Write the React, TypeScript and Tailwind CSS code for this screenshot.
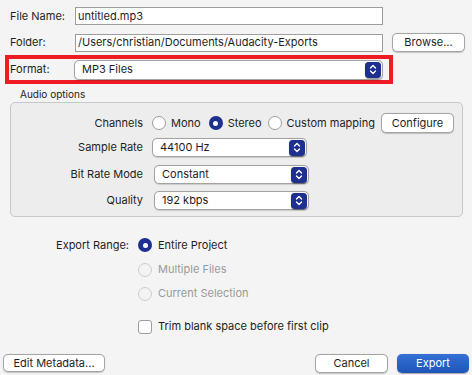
import React from 'react';

const font = { fontFamily: 'Inter, "Liberation Sans", sans-serif' };

const Chevrons: React.FC = () => (
  <span className="flex shrink-0 items-center justify-center w-[16px] h-[16px] rounded-[4px] bg-[#1d2f8f] shadow-[0_0.5px_1px_rgba(0,0,0,0.4)]">
    <svg width="8" height="11" viewBox="0 0 8 11" fill="none" stroke="white" strokeWidth="1.4" strokeLinecap="round" strokeLinejoin="round">
      <path d="M1.5 4 L4 1.5 L6.5 4" />
      <path d="M1.5 7 L4 9.5 L6.5 7" />
    </svg>
  </span>
);

const Select: React.FC<{ value: string; width: string; height: string }> = ({ value, width, height }) => (
  <div className={`flex items-center justify-between ${width} ${height} rounded-[5px] border border-[#a3a3a3] bg-white pl-[7px] pr-[1px] shadow-[0_0.5px_1px_rgba(0,0,0,0.15)]`}>
    <span>{value}</span>
    <Chevrons />
  </div>
);

const Radio: React.FC<{ checked?: boolean; disabled?: boolean }> = ({ checked, disabled }) =>
  checked ? (
    <span className="flex shrink-0 items-center justify-center w-[14px] h-[14px] rounded-full bg-[#1d2f8f]">
      <span className="w-[5px] h-[5px] rounded-full bg-white" />
    </span>
  ) : (
    <span
      className={`shrink-0 w-[14px] h-[14px] rounded-full border ${
        disabled ? 'border-[#cdcdcd] bg-[#f3f3f3]' : 'border-[#9c9c9c] bg-white'
      }`}
    />
  );

const Button: React.FC<{ label: string; className: string }> = ({ label, className }) => (
  <div
    className={`flex shrink-0 items-center justify-center whitespace-nowrap rounded-[5px] border border-[#a5a5a5] bg-white shadow-[0_0.5px_1px_rgba(0,0,0,0.2)] ${className}`}
  >
    {label}
  </div>
);

export default function App() {
  return (
    <div className="relative w-[472px] h-[375px] overflow-hidden bg-[#f4f4f4] text-[11px] text-[#1e1e1e] pt-[7px] whitespace-nowrap" style={font}>
      {/* File name */}
      <div className="flex items-center h-[18px]">
        <span className="w-[75px] pl-[10px]">File Name:</span>
        <div className="flex items-center w-[308px] h-[18px] border border-[#9d9d9d] bg-white pl-[2px]">untitled.mp3</div>
      </div>

      {/* Folder */}
      <div className="flex items-center h-[19px] mt-[8px]">
        <span className="w-[75px] pl-[10px]">Folder:</span>
        <div className="flex items-center w-[308px] h-[18px] border border-[#9d9d9d] bg-white pl-[2px]">
          /Users/christian/Documents/Audacity-Exports
        </div>
        <Button label="Browse..." className="ml-[9px] w-[73px] h-[19px]" />
      </div>

      {/* Format (highlighted) */}
      <div className="flex items-center ml-[5px] mt-[3px] w-[388px] h-[29px] border-4 border-[#ee1b24]">
        <span className="w-[65px] pl-[1px]">Format:</span>
        <Select value="MP3 Files" width="w-[309px]" height="h-[20px]" />
      </div>

      <div className="pl-[20px] mt-[3px] text-[10px] leading-[14px]">Audio options</div>

      {/* Audio options group */}
      <div className="ml-[10px] mt-[1px] w-[453px] h-[115px] rounded-[5px] border border-[#c8c8c8] bg-[#ededed] pt-[10px]">
        <div className="flex items-center h-[20px]">
          <span className="w-[132px] text-right">Channels</span>
          <div className="flex items-center ml-[9px] gap-[5px]">
            <Radio />
            <span>Mono</span>
          </div>
          <div className="flex items-center ml-[8px] gap-[5px]">
            <Radio checked />
            <span>Stereo</span>
          </div>
          <div className="flex items-center ml-[6px] gap-[5px]">
            <Radio />
            <span>Custom mapping</span>
          </div>
          <Button label="Configure" className="ml-[6px] w-[73px] h-[20px]" />
        </div>
        <div className="flex items-center h-[19px] mt-[5px]">
          <span className="w-[132px] text-right">Sample Rate</span>
          <div className="ml-[9px]">
            <Select value="44100 Hz" width="w-[155px]" height="h-[19px]" />
          </div>
        </div>
        <div className="flex items-center h-[19px] mt-[8px]">
          <span className="w-[132px] text-right">Bit Rate Mode</span>
          <div className="ml-[11px]">
            <Select value="Constant" width="w-[155px]" height="h-[19px]" />
          </div>
        </div>
        <div className="flex items-center h-[19px] mt-[7px]">
          <span className="w-[132px] text-right">Quality</span>
          <div className="ml-[11px]">
            <Select value="192 kbps" width="w-[155px]" height="h-[19px]" />
          </div>
        </div>
      </div>

      {/* Export range */}
      <div className="flex mt-[19px]">
        <span className="w-[129px] text-right h-[18px] leading-[18px]">Export Range:</span>
        <div className="flex flex-col ml-[9px]">
          <div className="flex items-center h-[18px] gap-[6px]">
            <Radio checked />
            <span>Entire Project</span>
          </div>
          <div className="flex items-center h-[18px] gap-[6px] mt-[6.5px] text-[#9a9a9a]">
            <Radio disabled />
            <span>Multiple Files</span>
          </div>
          <div className="flex items-center h-[18px] gap-[6px] mt-[6px] text-[#9a9a9a]">
            <Radio disabled />
            <span>Current Selection</span>
          </div>
          <div className="flex items-center h-[18px] gap-[6px] mt-[15px]">
            <span className="shrink-0 w-[14px] h-[14px] rounded-[3px] border border-[#9c9c9c] bg-white" />
            <span>Trim blank space before first clip</span>
          </div>
        </div>
      </div>

      {/* Bottom buttons */}
      <div className="flex items-center mt-[18px] pl-[3px] pr-[3px] h-[19px]">
        <Button label="Edit Metadata..." className="w-[102px] h-[18px]" />
        <div className="flex-1" />
        <Button label="Cancel" className="w-[73px] h-[19px]" />
        <div className="ml-[9px] flex items-center justify-center w-[72px] h-[19px] rounded-[5px] bg-gradient-to-b from-[#3470d6] to-[#1f55b8] text-white shadow-[0_0.5px_1px_rgba(0,0,0,0.3)]">
          Export
        </div>
      </div>
    </div>
  );
}
